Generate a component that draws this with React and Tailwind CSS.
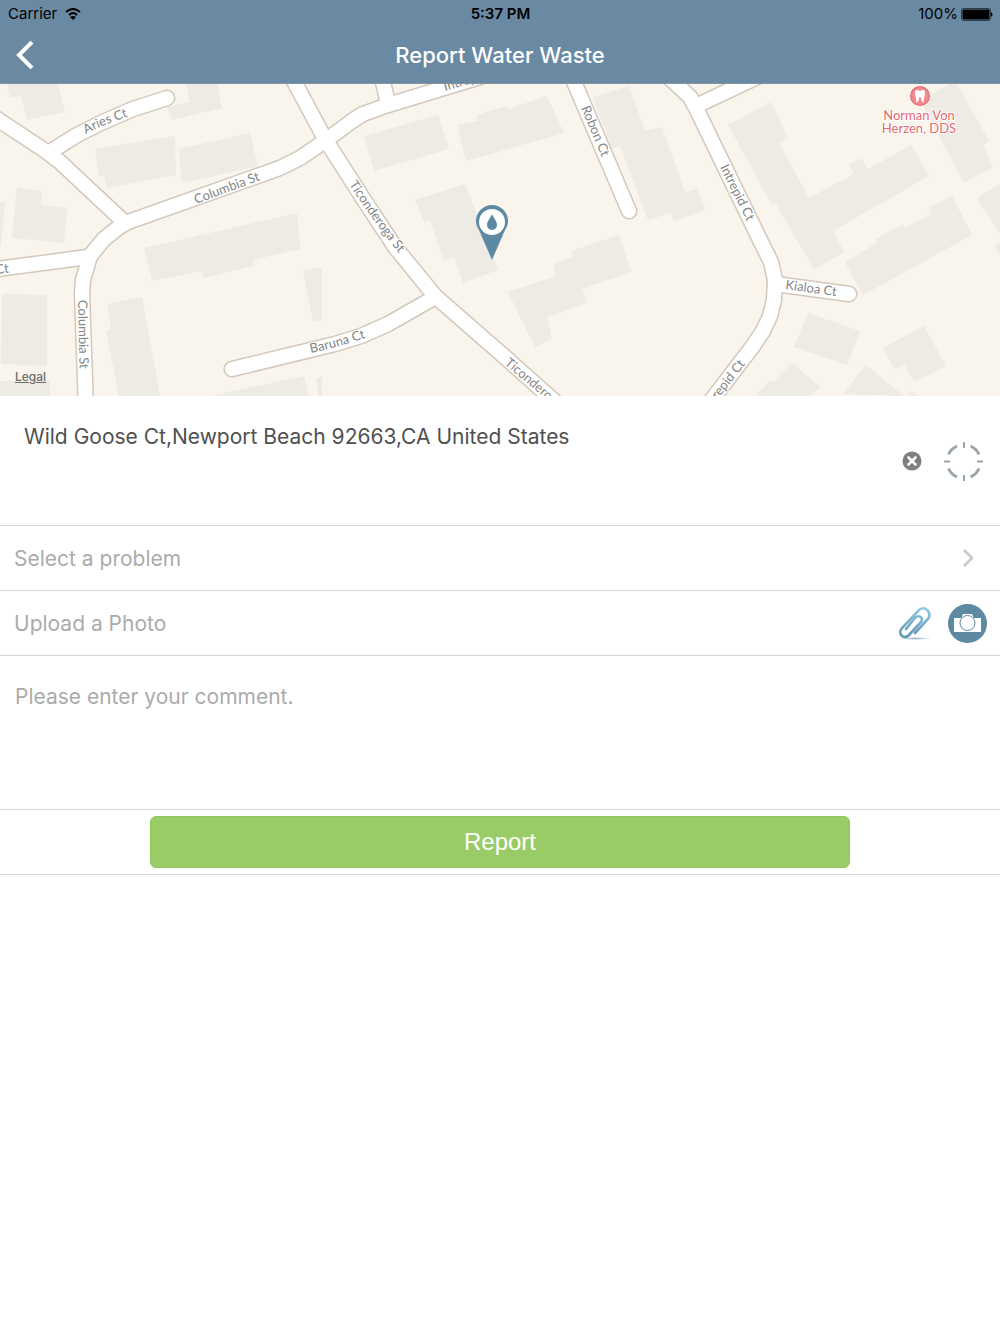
import { useState } from 'react'

const BUILDINGS = [
  '7,84 10,97 21,96 27,120 65,112 58,84',
  '186,84 190,102 167,107 172,120 222,108 217,84',
  '95,149 175,136 176,175 107,188 104,176 99,177',
  '179,149 250,133 258,166 182,183',
  '17,188 42,191 41,205 67,208 64,243 12,238',
  '0,202 5,202 1,246 0,246',
  '144,248 297,213 300,249 253,260 254,266 204,278 202,271 152,281',
  '303,271 322,267 322,320 313,321',
  '107,304 142,297 160,396 119,396 106,331 111,329',
  '2,294 47,295 47,366 1,364',
  '0,381 50,381 50,396 0,396',
  '210,396 304,376 309,396',
  '316,378 322,377 322,396 319,396',
  '364,136 438,115 449,149 374,171',
  '457,125 478,121 477,115 506,106 508,109 547,96 564,133 466,161',
  '415,200 465,184 498,270 463,283 454,257 444,260 430,220 424,222',
  '508,292 556,276 553,264 573,257 571,251 619,235 631,272 582,289 587,303 547,317 552,339 535,347',
  '593,97 629,86 645,131 662,127 685,192 697,189 705,210 674,221 671,213 648,220 620,146 612,149',
  '728,125 771,102 788,138 779,143 809,198 854,174 849,165 862,158 868,169 911,145 929,176 833,231 844,252 814,269 776,204 772,205',
  '920,100 950,84 957,84 989,141 983,145 993,167 964,183',
  '845,262 877,243 876,239 903,224 905,228 931,214 929,207 952,196 972,235 863,295',
  '977,198 1000,184 1000,234',
  '994,246 1000,243 1000,256',
  '808,313 860,331 847,365 794,347',
  '883,348 924,326 946,366 914,382 905,365 894,369',
  '756,396 770,380 773,382 792,363 820,387 810,396',
  '843,394 866,365 904,396',
  '907,395 911,391 917,396',
]

const ROADS = [
  'M53 150 L77 135 L103 122 L133 109 L167 98',
  'M-12 113 L47 152 L60 162 L122 220',
  'M325 141 L300 158 L280 168 L128 222 L119 227 L104 239 L90 256 L83 280 L82 293 L86 410',
  'M-10 270 L88 257',
  'M325 141 L352 121 L363 114 L388 105 L480 77',
  'M380 70 L388 103',
  'M288 70 L325 139 L364 200 L395 247 L435 296 L506 358 L562 408',
  'M232 369 L335 344 L361 336 L388 324 L432 299',
  'M569 70 L629 211',
  'M660 70 L674 82 L690 97 L697 110 L760 240 L771 262 L775 280 L774 300 L770 316 L763 331 L753 346 L704 410',
  'M775 284 L849 294',
  'M698 105 L772 70',
]

const LABELS = [
  { id: 'aries', d: 'M86 134 Q106 123 145 111', text: 'Aries Ct' },
  { id: 'columbia-n', d: 'M196 204 L290 169', text: 'Columbia St' },
  { id: 'ticonderoga-n', d: 'M349 184 Q375 225 416 274', text: 'Ticonderoga St' },
  { id: 'robon', d: 'M581 108 L615 188', text: 'Robon Ct' },
  { id: 'intrepid-n', d: 'M720 167 L760 248', text: 'Intrepid Ct' },
  { id: 'kialoa', d: 'M785 289 L850 298', text: 'Kialoa Ct' },
  { id: 'baruna', d: 'M311 353 Q340 347 380 333', text: 'Baruna Ct' },
  { id: 'columbia-s', d: 'M78 300 L80 390', text: 'Columbia St' },
  { id: 'ticonderoga-s', d: 'M504 364 L592 437', text: 'Ticonderoga St' },
  { id: 'intrepid-s', d: 'M708 412 L765 339', text: 'Intrepid Ct' },
  { id: 'intrepid-top', d: 'M445 91 L520 69', text: 'Intrepid St' },
  { id: 'west', d: 'M-4 274 L40 269', text: 'Ct' },
]

function StreetMap() {
  return (
    <svg viewBox="0 84 1000 312" preserveAspectRatio="xMidYMid slice" className="block w-full h-full">
      <g fill="#eeeae4">
        {BUILDINGS.map(points => <polygon key={points} points={points}/>)}
      </g>
      <g fill="none" stroke="#d2c8bb" strokeWidth="17" strokeLinecap="round" strokeLinejoin="round">
        {ROADS.map(d => <path key={d} d={d}/>)}
      </g>
      <g fill="none" stroke="#fff" strokeWidth="14" strokeLinecap="round" strokeLinejoin="round">
        {ROADS.map(d => <path key={d} d={d}/>)}
      </g>
      <g className="font-['Lato',sans-serif] text-[13px]" fill="#858585" stroke="#fff" strokeWidth="2" paintOrder="stroke">
        {LABELS.map(l => (
          <g key={l.id}>
            <path id={l.id} d={l.d} fill="none" stroke="none"/>
            <text><textPath href={`#${l.id}`}>{l.text}</textPath></text>
          </g>
        ))}
      </g>

      <circle cx="920" cy="96" r="10" fill="#e5676f"/>
      <circle cx="920" cy="96" r="9" fill="#f08a8f"/>
      <path d="M915 93 C915 89 918 90 920 91 C922 90 925 89 925 93 C925 96 924 97 924 100 C924 103 922 103 921 99 C921 96 919 96 919 99 C918 103 916 103 916 100 C916 97 915 96 915 93Z" fill="#fff"/>
      <g className="font-['Lato',sans-serif] text-[13px]" fill="#e5676f" stroke="#fff" strokeWidth="2" paintOrder="stroke" textAnchor="middle">
        <text x="919" y="120">Norman Von</text>
        <text x="919" y="133">Herzen, DDS</text>
      </g>

      <path d="M492 260 L479 230 C477 227 476 224 476 221 A16 16 0 0 1 508 221 C508 224 507 227 505 230 Z" fill="#5e89a3"/>
      <circle cx="492" cy="222" r="13" fill="#fff"/>
      <path d="M492 214 C494 219 497 221 497 225 A5 5 0 0 1 487 225 C487 221 490 219 492 214Z" fill="#5e89a3"/>
    </svg>
  )
}

function WifiIcon() {
  return (
    <svg viewBox="0 0 16 12" className="w-4 h-3" fill="none" stroke="#000" strokeWidth="2">
      <path d="M1 4 Q8 -2 15 4"/>
      <path d="M4 7 Q8 3 12 7"/>
      <path d="M8 12 L5 9 Q8 7 11 9 Z" fill="#000" stroke="none"/>
    </svg>
  )
}

function BatteryIcon() {
  return (
    <svg viewBox="0 0 32 13" className="w-8 h-[13px]">
      <rect x="0.5" y="0.5" width="29" height="12" rx="2" fill="none" stroke="#2b3b48"/>
      <rect x="1.5" y="1.5" width="27" height="10" rx="1" fill="#000"/>
      <path d="M30 4 Q33 6.500 30 9Z" fill="#000"/>
    </svg>
  )
}

function ClearIcon() {
  return (
    <svg viewBox="0 0 20 20" className="w-5 h-5">
      <circle cx="10" cy="10" r="9.500" fill="#7f7f7f"/>
      <path d="M6.500 6.500 L13.500 13.500 M13.500 6.500 L6.500 13.500" stroke="#fff" strokeWidth="2.600" strokeLinecap="round"/>
    </svg>
  )
}

function LocateIcon() {
  return (
    <svg viewBox="0 0 40 40" className="w-10 h-10" fill="none" stroke="#9aa5a6">
      <path d="M20 1 V7 M20 34 V40 M0 20.500 H6 M33 20.500 H39" strokeWidth="2"/>
      <path d="M26.500 5 A17 17 0 0 1 35 13.500 M35 27.500 A17 17 0 0 1 26.500 36 M13 36 A17 17 0 0 1 4.500 27.500 M4.500 13.500 A17 17 0 0 1 13 5" strokeWidth="3"/>
    </svg>
  )
}

function PaperclipIcon() {
  return (
    <svg viewBox="0 0 34 34" className="w-[34px] h-[34px]" fill="none">
      <defs>
        <linearGradient id="clip" x1="0" y1="0" x2="0" y2="1">
          <stop offset="0" stopColor="#8fc9e6"/>
          <stop offset="1" stopColor="#5e93ad"/>
        </linearGradient>
        <radialGradient id="clip-shadow">
          <stop offset="0" stopColor="#8fb3c5"/>
          <stop offset="1" stopColor="#8fb3c5" stopOpacity="0"/>
        </radialGradient>
      </defs>
      <ellipse cx="17" cy="32.500" rx="17" ry="1.500" fill="url(#clip-shadow)"/>
      <path d="M17 27 L30 13 C34 7 28 -1 21 4 L4 22 C-1 28 6 34 11 29 L23 16 C26 12 21 8 17 12 L8 23" stroke="url(#clip)" strokeWidth="2.600" strokeLinecap="round"/>
    </svg>
  )
}

function CameraIcon() {
  return (
    <svg viewBox="0 0 40 40" className="w-10 h-10">
      <circle cx="20.500" cy="20.500" r="19.500" fill="#5e89a3"/>
      <path d="M14 16 L16 11 H25 L27 16 Z" fill="#fff"/>
      <path d="M7 15 H34 V29 H7 Z" fill="#fff"/>
      <circle cx="20.500" cy="20" r="7.500" fill="#fff" stroke="#5e89a3" strokeWidth="1"/>
    </svg>
  )
}

export default function App() {
  const [address, setAddress] = useState('Wild Goose Ct,Newport Beach 92663,CA United States')
  const [comment, setComment] = useState('')

  return (
    <div className="min-h-screen bg-white font-['Inter',sans-serif] text-[21px] leading-7">
      <header className="h-21 bg-[#6a89a2] border-b border-[#8494a0]">
        <div className="h-7 pl-2 pr-[7px] grid grid-cols-3 items-center text-[15px] leading-5 text-black">
          <div className="flex items-center gap-2">
            <span>Carrier</span>
            <WifiIcon/>
          </div>
          <span className="text-center font-semibold">5:37 PM</span>
          <div className="flex items-center justify-end gap-[3px]">
            <span>100%</span>
            <BatteryIcon/>
          </div>
        </div>
        <div className="h-[54px] px-4 grid grid-cols-[40px_1fr_40px] items-center">
          <button type="button" aria-label="Back">
            <svg viewBox="0 0 18 28" className="w-[18px] h-7" fill="none" stroke="#fff" strokeWidth="4">
              <path d="M16 1 L3 14 L16 27"/>
            </svg>
          </button>
          <h1 className="text-center text-[22px] font-medium text-white">Report Water Waste</h1>
        </div>
      </header>

      <div className="relative h-78 bg-[#f9f5ed]">
        <StreetMap/>
        <a href="#legal" className="absolute left-[15px] bottom-[11px] text-[12px] leading-4 font-medium text-[#6b6b69] underline">Legal</a>
      </div>

      <form onSubmit={e => e.preventDefault()}>
        <div className="h-[130px] flex items-center border-b border-[#d5d5d8] pl-6 pr-4">
          <textarea
            aria-label="Address"
            value={address}
            onChange={e => setAddress(e.target.value)}
            className="flex-1 self-stretch resize-none bg-transparent outline-none pt-[27px] text-[#505050]"
          />
          <button type="button" aria-label="Clear address" onClick={() => setAddress('')} className="mr-[22px]">
            <ClearIcon/>
          </button>
          <button type="button" aria-label="Use current location">
            <LocateIcon/>
          </button>
        </div>

        <button type="button" className="w-full h-[65px] flex items-center justify-between border-b border-[#d5d5d8] pl-[14px] pr-[25px] text-[#ababab]">
          <span className="pt-px">Select a problem</span>
          <svg viewBox="0 0 14 18" className="w-[14px] h-[18px]" fill="none" stroke="#c7c7cc" strokeWidth="2.500">
            <path d="M3 1 L11 9 L3 17"/>
          </svg>
        </button>

        <div className="h-[65px] flex items-center border-b border-[#d5d5d8] pl-[14px] pr-[13px]">
          <span className="flex-1 pt-px text-[#ababab]">Upload a Photo</span>
          <button type="button" aria-label="Attach a photo" className="mr-[15px]">
            <PaperclipIcon/>
          </button>
          <button type="button" aria-label="Take a photo">
            <CameraIcon/>
          </button>
        </div>

        <div className="h-[154px] border-b border-[#d5d5d8]">
          <textarea
            aria-label="Comment"
            value={comment}
            onChange={e => setComment(e.target.value)}
            placeholder="Please enter your comment."
            className="block w-full h-full resize-none bg-transparent outline-none px-[15px] pt-[27px] placeholder:text-[#ababab]"
          />
        </div>

        <div className="h-[65px] flex items-center justify-center border-b border-[#d5d5d8]">
          <button type="submit" className="w-7/10 h-13 rounded-md bg-[#99cc67] border border-[#8fc95a] font-['Liberation_Sans',sans-serif] text-[24px] text-white">
            Report
          </button>
        </div>
      </form>
    </div>
  )
}
